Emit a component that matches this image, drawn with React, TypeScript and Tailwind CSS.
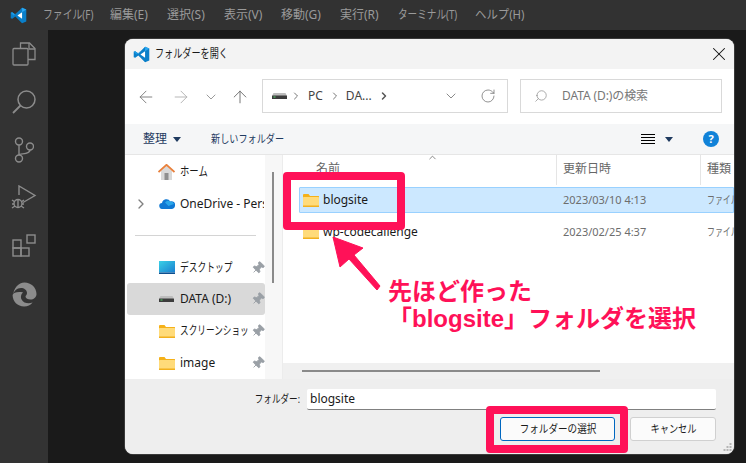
import React from "react";
import { ArrowLeft, ArrowRight, ArrowUp, ChevronDown, ChevronRight, ChevronUp, RotateCw, Search, X, Pin } from "lucide-react";

const VSCode = ({ size = 18 }: { size?: number }) => (
  <svg width={size} height={size} viewBox="0 0 24 24" className="shrink-0">
    <path d="M17 1 7.500 10.600 3.200 7.300 1 8.200v7.600l2.200.9 4.300-3.300L17 23l6-2.400V3.400z" fill="#0a7fc9" />
    <path d="M17 1 7.500 10.600 3.200 7.300 1 8.200 5 12 17.500 1.200z" fill="#1c9ce8" />
    <path d="M17 7.500 10.500 12l6.500 4.500z" fill="#fff" />
    <path d="M17 1v6.400L23 3.400z" fill="#2aa8f2" />
  </svg>
);

const Folder = () => (
  <svg width="16" height="14" viewBox="0 0 16 14" className="shrink-0">
    <path d="M0 2a1 1 0 0 1 1-1h4.500L7 3h8a1 1 0 0 1 1 1v2H0z" fill="#f5b119" />
    <rect x="0" y="3" width="16" height="11" rx="1" fill="#f5b119" />
    <rect x="0" y="4" width="16" height="9" rx="0.500" fill="#ffdb7a" />
    <rect x="0" y="12.500" width="16" height="1.500" fill="#f2b01e" />
  </svg>
);

const Drive = ({ w = 15 }: { w?: number }) => (
  <svg width={w} height="6" viewBox="0 0 15 6" className="shrink-0">
    <path d="M1.500 0h12L15 3H0z" fill="#bdbdbd" />
    <rect y="2.500" width="15" height="3.500" rx="0.500" fill="#3c3c3c" />
    <rect x="1.500" y="3.500" width="2" height="1" fill="#53d66b" />
  </svg>
);

const Home = () => (
  <svg width="17" height="16" viewBox="0 0 17 16" className="shrink-0">
    <path d="M3 7v9h11V7L8.500 2z" fill="#d9d9d9" />
    <rect x="6.500" y="9" width="4" height="7" fill="#8f8f8f" />
    <path d="M0.500 8 8.500 0.800 16.500 8" fill="none" stroke="#e8803c" strokeWidth="1.800" />
  </svg>
);

const Cloud = () => (
  <svg width="16" height="11" viewBox="0 0 16 11" className="shrink-0">
    <path d="M3.500 11A3 3 0 0 1 3 5a4.500 4.500 0 0 1 8.300-1.500A3.500 3.500 0 0 1 16 7.500 3.500 3.500 0 0 1 13 11z" fill="#0f78d4" />
    <path d="M6 4.500a4 4 0 0 1 5.300-1A3.500 3.500 0 0 1 15 6L9.500 8z" fill="#2ba6ea" />
  </svg>
);

const Desktop = () => (
  <svg width="16" height="13" viewBox="0 0 16 13" className="shrink-0">
    <defs>
      <linearGradient id="dk" x1="0" x2="1" y1="0" y2="1">
        <stop offset="0" stopColor="#3ad1e6" />
        <stop offset="1" stopColor="#1a7fd0" />
      </linearGradient>
    </defs>
    <rect width="16" height="11.500" fill="url(#dk)" />
    <rect y="11.500" width="16" height="1.500" fill="#0d4f8f" />
  </svg>
);

const PinIcon = () => (
  <Pin size={14} className="text-[#9aa0a6] rotate-45 shrink-0" fill="#9aa0a6" strokeWidth={1.500} />
);

const Caret = () => (
  <svg width="8" height="5" viewBox="0 0 8 5" className="shrink-0">
    <path d="M0 0h8L4 5z" fill="#1f3a5f" />
  </svg>
);

const menus: [string, string, string][] = [
  ["ファイル(F)", "w-[50px]", "scale-x-[0.82]"],
  ["編集(E)", "w-[40px]", "scale-x-100"],
  ["選択(S)", "w-[40px]", "scale-x-100"],
  ["表示(V)", "w-[40px]", "scale-x-100"],
  ["移動(G)", "w-[42px]", "scale-x-100"],
  ["実行(R)", "w-[41px]", "scale-x-100"],
  ["ターミナル(T)", "w-[60px]", "scale-x-[0.8]"],
  ["ヘルプ(H)", "w-[48px]", "scale-x-[0.95]"],
];

const NavRow = ({
  icon,
  label,
  pin,
  selected,
  chevron,
  scale = "scale-x-100",
}: {
  icon: React.ReactNode;
  label: string;
  pin?: boolean;
  selected?: boolean;
  chevron?: boolean;
  scale?: string;
}) => (
  <div className={`h-8 flex items-center rounded-[3px] ${selected ? "bg-[#d9d9d9]" : ""}`}>
    <div className="w-4 ml-[6px] mr-[9px] flex justify-center shrink-0">
      {chevron && <ChevronRight size={16} className="text-[#808080]" strokeWidth={2} />}
    </div>
    <div className="w-[17px] flex justify-center items-center shrink-0">{icon}</div>
    <div className={`ml-[5px] overflow-hidden whitespace-nowrap text-[12px] text-[#1a1a1a] shrink-0 ${pin ? "w-[68px]" : "w-[84px]"}`}>
      <span className={`inline-block origin-left ${scale}`}>{label}</span>
    </div>
    {pin && <span className="ml-[3px] flex shrink-0"><PinIcon /></span>}
  </div>
);

const FileRow = ({ name, date, selected }: { name: string; date: string; selected?: boolean }) => (
  <div
    className={`h-[26px] flex items-center border whitespace-nowrap ${
      selected ? "bg-[#cce8ff] border-[#99d1ff]" : "border-transparent"
    } rounded-l-[1px]`}
  >
    <div className="ml-[3px] mr-[4px] flex shrink-0"><Folder /></div>
    <span className="w-[240px] shrink-0 text-[12px] text-[#1a1a1a]">{name}</span>
    <span className="w-[144px] shrink-0 text-[11px] text-[#6d6d6d]">{date}</span>
    <span className="inline-block origin-left scale-x-[0.72] text-[11px] text-[#6d6d6d]">ファイル</span>
  </div>
);

const Slot = ({ children }: { children: React.ReactNode }) => (
  <div className="h-12 w-12 flex items-center justify-center shrink-0">{children}</div>
);

export default function App() {
  return (
    <div
      className="relative w-[746px] h-[463px] overflow-hidden flex flex-col bg-[#1a1a1a]"
      style={{ fontFamily: '"Noto Sans", "Noto Sans CJK JP", sans-serif' }}
    >
      {/* VS Code title bar */}
      <div className="h-[30px] bg-[#323232] flex items-center shrink-0">
        <div className="w-[36px] mr-[7px] flex justify-center shrink-0"><VSCode size={17} /></div>
        <div className="flex gap-[17px] text-[12px] text-[#9a9a9a] whitespace-nowrap">
          {menus.map(([m, w, s]) => (
            <div key={m} className={`${w} shrink-0`}>
              <span className={`inline-block origin-left ${s}`}>{m}</span>
            </div>
          ))}
        </div>
      </div>

      <div className="flex flex-1 min-h-0">
        {/* Activity bar */}
        <div className="w-12 bg-[#333333] flex flex-col items-center text-[#8c8c8c] shrink-0">
          <Slot>
            <svg width="24" height="24" viewBox="0 0 24 24" fill="none" stroke="currentColor" strokeWidth="1.300">
              <path d="M8.500 6.500V1h9l5.500 5.500V17.500H16" />
              <path d="M17 1v6h6" />
              <rect x="1" y="6.500" width="15" height="16.500" rx="1" />
            </svg>
          </Slot>
          <Slot>
            <svg width="24" height="24" viewBox="0 0 24 24" fill="none" stroke="currentColor" strokeWidth="1.500">
              <circle cx="14.500" cy="9.500" r="8.500" />
              <path d="M8.500 15.500 1 23" strokeWidth="1.800" />
            </svg>
          </Slot>
          <Slot>
            <svg width="20" height="26" viewBox="0 0 20 26" fill="none" stroke="currentColor" strokeWidth="1.400">
              <circle cx="5" cy="4.500" r="3.500" />
              <circle cx="5" cy="21.500" r="3.500" />
              <circle cx="16" cy="9.500" r="3.500" />
              <path d="M5 8v10M16 13c0 5-11 3-11 5" />
            </svg>
          </Slot>
          <Slot>
            <svg width="26" height="26" viewBox="0 0 26 26" fill="none" stroke="currentColor" strokeWidth="1.400">
              <path d="M8 10V1l16 9.500-12 7" />
              <circle cx="7" cy="18.500" r="4" />
              <path d="M7 14.500v8M1 15l3 2M13 15l-3 2M1 23l3-2M13 23l-3-2M1 19h2M11 19h2" />
            </svg>
          </Slot>
          <Slot>
            <svg width="24" height="24" viewBox="0 0 24 24" fill="none" stroke="currentColor" strokeWidth="1.400">
              <rect x="1" y="6" width="8" height="8" />
              <rect x="1" y="14" width="8" height="8" />
              <rect x="9" y="14" width="8" height="8" />
              <rect x="15" y="1" width="8" height="8" />
            </svg>
          </Slot>
          <Slot>
            <svg width="25" height="25" viewBox="0 0 25 25">
              <path
                d="M12.500 0.500C19 0.500 24.500 5.500 24.500 12c0 3.500-3 5.500-6 5.500-2.500 0-5-1-5-3 0-1 1.500-1.500 1.500-3.500 0-3-3-5-6-5-4 0-8 3.500-8 8C1.500 6 6.500 0.500 12.500 0.500z"
                fill="#8c8c8c"
              />
              <path
                d="M0.600 13c0 6.500 5 11.500 11.500 11.500 3.500 0 6.500-1.500 8.500-4-3.500 1.500-9 1-11-3-1.500-3 0-6 1.500-7-5-1-10 0-10.500 2.500z"
                fill="#8c8c8c"
              />
            </svg>
          </Slot>
        </div>

        {/* Editor with dialog */}
        <div className="flex-1 pl-[77px] pt-[9px]">
          <div className="w-[609px] h-[415px] rounded-[8px] overflow-hidden flex flex-col bg-[#eeeeee] shadow-[0_0_0_1px_#3a3a3a]">
            {/* Title */}
            <div className="h-[30px] bg-[#f3f3f3] flex items-center shrink-0">
              <div className="ml-[8px] mr-[5px] flex"><VSCode size={17} /></div>
              <span className="inline-block origin-left scale-x-[0.76] text-[12px] text-[#1a1a1a]">フォルダーを開く</span>
              <X size={22} className="ml-auto mr-[4px] text-[#111]" strokeWidth={1.100} />
            </div>

            {/* Nav row */}
            <div className="h-[55px] bg-white flex items-center shrink-0">
              <div className="w-[137px] flex items-center text-[#8a8a8a] shrink-0">
                <ArrowLeft size={20} className="ml-[11px] text-[#7a7a7a]" strokeWidth={1.100} />
                <ArrowRight size={20} className="ml-[15px] text-[#b0b0b0]" strokeWidth={1.100} />
                <ChevronDown size={16} className="ml-[12px]" strokeWidth={1.300} />
                <ArrowUp size={20} className="ml-[11px] text-[#6a6a6a]" strokeWidth={1.100} />
              </div>
              <div className="w-[246px] h-[34px] border border-[#d9d9d9] flex items-center text-[12px] text-[#444] -mt-[1px] shrink-0">
                <div className="ml-[9px] mr-[3px] flex"><Drive /></div>
                <ChevronRight size={12} className="text-[#777]" />
                <span className="ml-[6px]">PC</span>
                <ChevronRight size={12} className="ml-[6px] text-[#777]" />
                <span className="ml-[5px]">DA...</span>
                <ChevronRight size={12} className="ml-[6px] text-[#555]" strokeWidth={3} />
                <ChevronDown size={16} className="ml-auto text-[#777]" strokeWidth={1.300} />
                <RotateCw size={16} className="ml-[21px] mr-[11px] text-[#777]" strokeWidth={1.200} />
              </div>
              <div className="ml-[12px] w-[202px] h-[34px] border border-[#d9d9d9] flex items-center text-[12px] text-[#777] -mt-[1px] shrink-0">
                <Search size={14} className="ml-[13px] -scale-x-100 text-[#8a8a8a]" strokeWidth={1.200} />
                <span className="ml-[14px] tracking-[-0.1px]">DATA (D:)の検索</span>
              </div>
            </div>

            {/* Toolbar */}
            <div className="h-[30px] bg-[#f5f6f7] flex items-center text-[11px] text-[#1f3a5f] shrink-0">
              <span className="ml-[18px] text-[12px]">整理</span>
              <div className="ml-[6px] flex"><Caret /></div>
              <div className="ml-[30px] w-[74px] whitespace-nowrap">
                <span className="inline-block origin-left scale-x-[0.83]">新しいフォルダー</span>
              </div>
              <div className="ml-auto flex flex-col gap-[2px] w-[14px] mr-[10px]">
                <div className="h-px bg-black" />
                <div className="h-px bg-black" />
                <div className="h-px bg-black" />
                <div className="h-px bg-black" />
              </div>
              <Caret />
              <div className="ml-[30px] mr-[15px] w-4 h-4 rounded-full bg-[#1182d8] text-white text-[11px] font-bold flex items-center justify-center">?</div>
            </div>

            {/* Body */}
            <div className="h-[225px] flex bg-white shrink-0 border-t border-[#e6e6e6]">
              <div className="w-[140px] pl-[2px] pt-[1px] shrink-0 flex flex-col">
                <NavRow icon={<Home />} label="ホーム" scale="scale-x-[0.78]" />
                <NavRow icon={<Cloud />} label="OneDrive - Personal" chevron />
                <div className="h-8 flex items-center px-[8px]"><div className="h-px w-[121px] bg-[#d4d4d4]" /></div>
                <NavRow icon={<Desktop />} label="デスクトップ" pin scale="scale-x-[0.73]" />
                <NavRow icon={<Drive />} label="DATA (D:)" pin selected />
                <NavRow icon={<Folder />} label="スクリーンショット" pin scale="scale-x-[0.72]" />
                <NavRow icon={<Folder />} label="image" pin />
              </div>
              {/* Sidebar scrollbar */}
              <div className="w-[18px] bg-[#f7f7f7] pt-[17px] pl-[7px] shrink-0 border-r border-[#ececec]">
                <div className="w-[2px] h-[111px] bg-[#8a8a8a]" />
              </div>
              {/* File list */}
              <div className="flex-1 flex flex-col min-w-0">
                <div className="h-[30px] flex relative text-[12px] text-[#666] shrink-0">
                  <div className="w-[274px] pl-[33px] pt-[5px] border-r border-[#e5e5e5]">名前</div>
                  <ChevronUp size={11} className="absolute left-[144px] -top-[3px] text-[#555]" strokeWidth={1.500} />
                  <div className="w-[144px] pl-[6px] pt-[5px] border-r border-[#e5e5e5]">更新日時</div>
                  <div className="pl-[6px] pt-[5px]">種類</div>
                </div>
                <div className="pl-[16px] pt-[2px] flex-1 flex flex-col gap-[6px] overflow-hidden">
                  <FileRow name="blogsite" date="2023/03/10 4:13" selected />
                  <FileRow name="wp-codecallenge" date="2023/02/25 4:37" />
                </div>
                <div className="h-[16px] bg-[#f0f0f0] shrink-0 pl-[19px] pt-[7px]">
                  <div className="w-[298px] h-[2px] bg-[#8a8a8a]" />
                </div>
              </div>
            </div>

            {/* Bottom */}
            <div className="flex-1 bg-[#eeeeee] relative">
              <div className="flex items-center h-[21px] mt-[10px]">
                <div className="w-[175px] text-right text-[11px] text-[#1a1a1a] shrink-0 whitespace-nowrap">
                  <span className="inline-block origin-right scale-x-[0.78]">フォルダー:</span>
                </div>
                <div className="ml-[7px] w-[409px] h-[21px] bg-white border-b border-[#808080] rounded-[2px] pl-[3px] text-[12px] text-[#1a1a1a] flex items-center">
                  blogsite
                </div>
              </div>
              <div className="flex justify-end mt-[7px] pr-[18px] gap-[15px] text-[11px] text-[#1a1a1a]">
                <div className="w-[115px] h-[24px] border border-[#0067c0] rounded-[3px] bg-[#fbfbfb] flex items-center justify-center whitespace-nowrap">
                  <span className="inline-block scale-x-[0.87]">フォルダーの選択</span>
                </div>
                <div className="w-[86px] h-[24px] border border-[#d0d0d0] rounded-[3px] bg-[#fbfbfb] flex items-center justify-center whitespace-nowrap">
                  <span className="inline-block scale-x-[0.84]">キャンセル</span>
                </div>
              </div>
              <svg className="absolute right-[2px] bottom-[2px]" width="9" height="9" viewBox="0 0 9 9" fill="#b5b5b5">
                <rect x="6.500" y="0" width="2" height="2" />
                <rect x="3.500" y="3" width="2" height="2" />
                <rect x="6.500" y="3" width="2" height="2" />
                <rect x="0.500" y="6" width="2" height="2" />
                <rect x="3.500" y="6" width="2" height="2" />
                <rect x="6.500" y="6" width="2" height="2" />
              </svg>
            </div>
          </div>
        </div>
      </div>

      {/* Annotations */}
      <div className="absolute left-[283px] top-[172px] w-[122px] h-[58px] border-[8px] border-[#ff1158] rounded-[4px]" />
      <div className="absolute left-[486px] top-[406px] w-[142px] h-[47px] border-[8px] border-[#ff1158] rounded-[4px]" />
      <svg className="absolute left-[325px] top-[230px]" width="70" height="70" viewBox="0 0 70 70">
        <path d="M8 7 38 18 29 25 55 56 52 60 24 29 15 37z" fill="#ff1158" stroke="#ff1158" strokeWidth="1" strokeLinejoin="round" />
      </svg>
      <div
        className="absolute left-[388px] top-[278px] text-[#ff1158] font-bold text-[24px] leading-[27px] whitespace-nowrap"
        style={{
          textShadow: "0 0 3px #fff, 0 0 3px #fff, 0 0 3px #fff, 1px 1px 3px #fff",
          fontFamily: '"Liberation Sans", "Noto Sans CJK JP", sans-serif',
        }}
      >
        <div>先ほど作った</div>
        <div>「blogsite」フォルダを選択</div>
      </div>
    </div>
  );
}
